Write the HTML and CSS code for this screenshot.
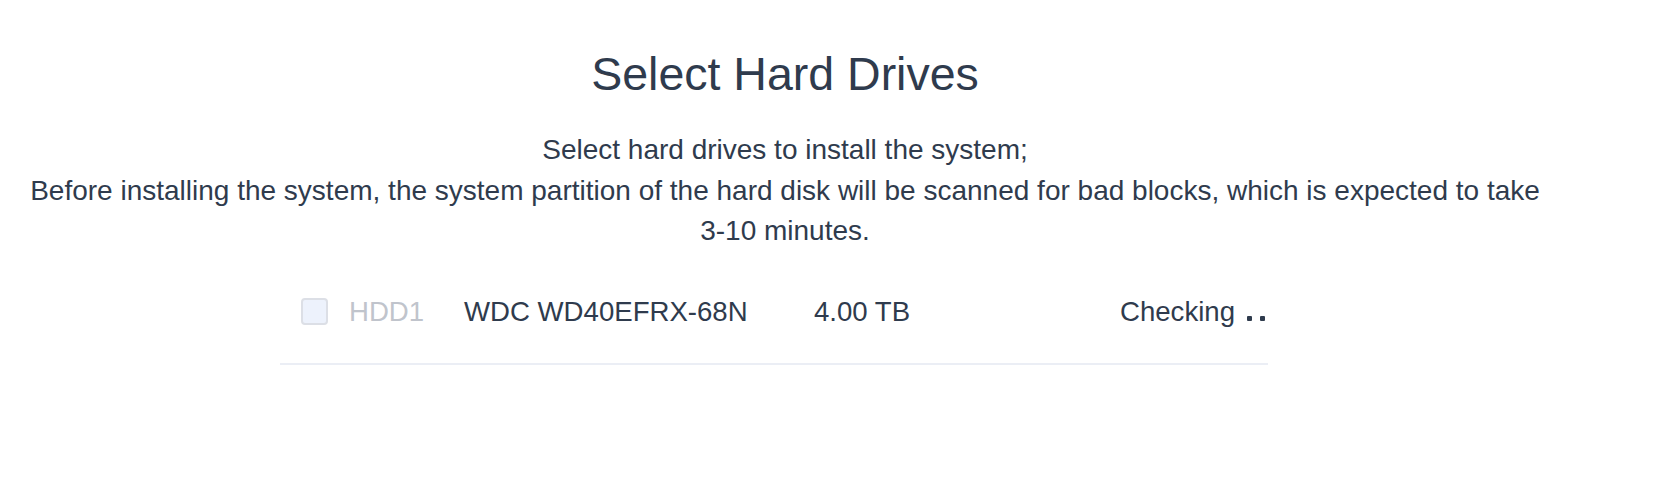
FILE: index.html
```html
<!DOCTYPE html>
<html lang="en">
<head>
  <meta charset="UTF-8">
  <meta name="viewport" content="width=device-width, initial-scale=1.0">
  <title>Select Hard Drives</title>
  <link rel="stylesheet" href="styles.css">
</head>
<body>
  <div class="setup">
    <h1>Select Hard Drives</h1>
    <p class="tips">
      Select hard drives to install the system;<br>
      Before installing the system, the system partition of the hard disk will be scanned for bad blocks, which is expected to take <span class="nobr">3-10</span> minutes.
    </p>

    <div class="disk-table">
      <div class="disk-row">
        <div class="cell"><span class="checkbox is-disabled"></span></div>
        <div class="cell slot">HDD1</div>
        <div class="cell">WDC WD40EFRX-68N</div>
        <div class="cell">4.00 TB</div>
        <div class="cell">Checking <span class="dots"><i></i><i></i></span></div>
      </div>
    </div>
  </div>
</body>
</html>
```

FILE: styles.css
```css
body {
  margin: 0;
  padding: 0;
  background: #fff;
  font-family: "Liberation Sans", Arial, Helvetica, sans-serif;
  color: #2f3b4d;
}
.setup {
  width: 1530px;
  margin-left: 20px;
  padding-top: 46px;
  text-align: center;
}
.setup h1 {
  margin: 0;
  font-size: 46.5px;
  line-height: 56px;
  font-weight: normal;
}
.tips {
  margin: 28px 0 0;
  font-size: 28px;
  line-height: 40.5px;
}
.nobr {
  white-space: nowrap;
}
.disk-table {
  width: 988px;
  margin: 6px 0 0 260px;
  text-align: left;
}
.disk-row {
  display: grid;
  grid-template-columns: 48px 115px 350px 306px 169px;
  align-items: center;
  padding: 32px 0 29px;
  border-bottom: 2px solid #ebeef5;
  font-size: 27.6px;
  line-height: 44px;
}
.cell {
  padding-left: 21px;
  white-space: nowrap;
}
.slot {
  color: #c0c4cc;
}
.checkbox {
  display: block;
  width: 27px;
  height: 27px;
  box-sizing: border-box;
  border: 2px solid #dcdfe6;
  border-radius: 4px;
  background: #edf2fc;
}
.dots {
  display: inline-block;
  margin-left: 4px;
}
.dots i {
  display: inline-block;
  width: 5px;
  height: 5px;
  margin-right: 8px;
  border-radius: 1px;
  background: #2f3b4d;
}
```
